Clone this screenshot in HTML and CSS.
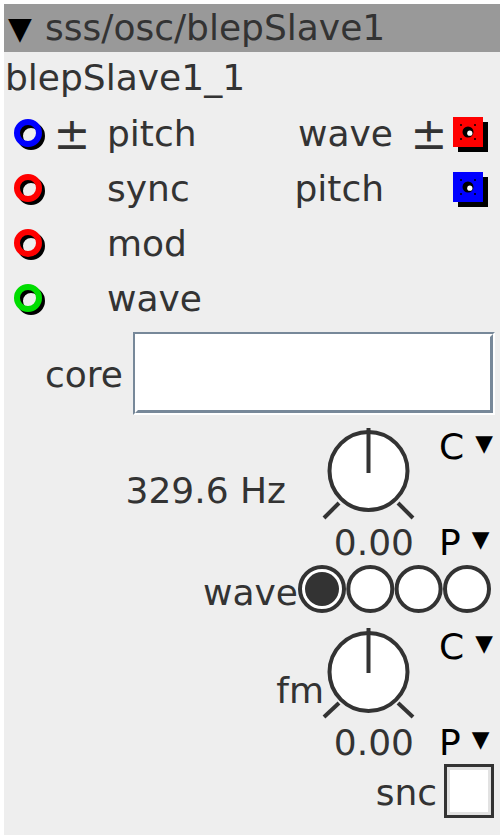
FILE: index.html
```
<!DOCTYPE html>
<html lang="en">
<head>
    <meta charset="UTF-8">
    <meta name="viewport" content="width=device-width, initial-scale=1.0">
    <title>blepSlave1</title>
    <link rel="stylesheet" href="styles.css">
</head>
<body>
    <div class="node">
        <div class="title"><span class="caret">▼</span><span class="path">sss/osc/blepSlave1</span></div>
        <div class="name">blepSlave1_1</div>

        <div class="ports">
            <div class="inlets">
                <div class="port">
                    <svg class="ring" width="40" height="40" viewBox="0 0 40 40">
                        <circle cx="21" cy="22" r="11" fill="none" stroke="#000" stroke-width="6"/>
                        <circle cx="18" cy="19" r="11" fill="none" stroke="#0000ff" stroke-width="6"/>
                    </svg>
                    <span class="pm">±</span>
                    <span class="plabel">pitch</span>
                </div>
                <div class="port">
                    <svg class="ring" width="40" height="40" viewBox="0 0 40 40">
                        <circle cx="21" cy="22" r="11" fill="none" stroke="#000" stroke-width="6"/>
                        <circle cx="18" cy="19" r="11" fill="none" stroke="#ff0000" stroke-width="6"/>
                    </svg>
                    <span class="pm"></span>
                    <span class="plabel">sync</span>
                </div>
                <div class="port">
                    <svg class="ring" width="40" height="40" viewBox="0 0 40 40">
                        <circle cx="21" cy="22" r="11" fill="none" stroke="#000" stroke-width="6"/>
                        <circle cx="18" cy="19" r="11" fill="none" stroke="#ff0000" stroke-width="6"/>
                    </svg>
                    <span class="pm"></span>
                    <span class="plabel">mod</span>
                </div>
                <div class="port">
                    <svg class="ring" width="40" height="40" viewBox="0 0 40 40">
                        <circle cx="21" cy="22" r="11" fill="none" stroke="#000" stroke-width="6"/>
                        <circle cx="18" cy="19" r="11" fill="none" stroke="#00dd00" stroke-width="6"/>
                    </svg>
                    <span class="pm"></span>
                    <span class="plabel">wave</span>
                </div>
            </div>

            <div class="outlets">
                <div class="port out">
                    <span class="plabel">wave</span>
                    <span class="pm">±</span>
                    <svg class="jack" width="40" height="40" viewBox="0 0 40 40">
                        <rect x="5" y="5" width="30" height="30" fill="#000"/>
                        <rect x="0" y="0" width="30" height="30" fill="#ff0000"/>
                        <circle cx="15" cy="15" r="5.5" fill="#000"/>
                        <circle cx="16.8" cy="16.2" r="2.6" fill="#fff"/>
                        <path d="M7 8h2M8 7v2M21 8h2M22 7v2M7 22h2M8 21v2M21 22h2M22 21v2" stroke="#000" stroke-width="1"/>
                    </svg>
                </div>
                <div class="port out">
                    <span class="plabel short">pitch</span>
                    <span class="pm"></span>
                    <svg class="jack" width="40" height="40" viewBox="0 0 40 40">
                        <rect x="5" y="5" width="30" height="30" fill="#000"/>
                        <rect x="0" y="0" width="30" height="30" fill="#0000ff"/>
                        <circle cx="15" cy="15" r="5.5" fill="#000"/>
                        <circle cx="16.8" cy="16.2" r="2.6" fill="#fff"/>
                        <path d="M7 8h2M8 7v2M21 8h2M22 7v2M7 22h2M8 21v2M21 22h2M22 21v2" stroke="#000" stroke-width="1"/>
                    </svg>
                </div>
            </div>
        </div>

        <div class="core-row">
            <span class="core-label">core</span>
            <div class="field"><div class="field-in"></div></div>
        </div>

        <div class="knob-block first">
            <span class="klabel hz">329.6 Hz</span>
            <svg class="knob" width="96" height="96" viewBox="0 0 96 96">
                <circle cx="46.5" cy="45" r="39" fill="#fff" stroke="#333" stroke-width="4"/>
                <line x1="46.5" y1="2" x2="46.5" y2="47" stroke="#333" stroke-width="4"/>
                <line x1="2" y1="92" x2="17" y2="77" stroke="#333" stroke-width="4"/>
                <line x1="76" y1="77" x2="91" y2="92" stroke="#333" stroke-width="4"/>
            </svg>
            <div class="menu top"><span>C</span><span class="tri">▼</span></div>
            <span class="value">0.00</span>
            <div class="menu"><span>P</span><span class="tri">▼</span></div>
        </div>

        <div class="radio-row">
            <span class="rlabel">wave</span>
            <svg class="radios" width="196" height="52" viewBox="0 0 196 52">
                <circle cx="24" cy="25" r="22" fill="#fff" stroke="#333" stroke-width="4"/>
                <circle cx="72.3" cy="25" r="22" fill="#fff" stroke="#333" stroke-width="4"/>
                <circle cx="120.6" cy="25" r="22" fill="#fff" stroke="#333" stroke-width="4"/>
                <circle cx="169" cy="25" r="22" fill="#fff" stroke="#333" stroke-width="4"/>
                <circle cx="24" cy="25" r="17" fill="#333"/>
            </svg>
        </div>

        <div class="knob-block second">
            <span class="klabel fm">fm</span>
            <svg class="knob" width="96" height="96" viewBox="0 0 96 96">
                <circle cx="46.5" cy="46" r="39" fill="#fff" stroke="#333" stroke-width="4"/>
                <line x1="46.5" y1="2" x2="46.5" y2="47" stroke="#333" stroke-width="4"/>
                <line x1="2" y1="91" x2="17" y2="77" stroke="#333" stroke-width="4"/>
                <line x1="76" y1="77" x2="91" y2="91" stroke="#333" stroke-width="4"/>
            </svg>
            <div class="menu top"><span>C</span><span class="tri">▼</span></div>
            <span class="value">0.00</span>
            <div class="menu"><span>P</span><span class="tri">▼</span></div>
        </div>

        <div class="check-row">
            <span class="clabel">snc</span>
            <div class="check"></div>
        </div>
    </div>
</body>
</html>
```

FILE: styles.css
```
html{
    background-color: white;
}
body{
    margin: 0;
    font-family: "DejaVu Sans", sans-serif;
    font-size: 36px;
    line-height: 42px;
    color: #333;
}
.node{
    margin: 4px 0 0 4px;
    width: 496px;
    height: 831px;
    background-color: #eee;
}
.title{
    height: 48px;
    line-height: 48px;
    background-color: #999;
    display: flex;
    align-items: center;
}
.caret{
    color: black;
    font-size: 31px;
    margin-left: 4px;
    width: 37px;
}
.name{
    height: 54px;
    line-height: 52px;
    padding-left: 1px;
}

/* ports */
.ports{
    display: flex;
    justify-content: space-between;
    height: 223px;
}
.port{
    display: flex;
    align-items: center;
    height: 55px;
}
.ring{
    margin-left: 6px;
    flex: none;
}
.pm{
    font-size: 44px;
    width: 56px;
    text-align: center;
    flex: none;
}
.inlets .pm{
    width: 44px;
}
.inlets .plabel{
    margin-left: 13px;
}
.outlets{
    padding-right: 7px;
}
.port.out{
    justify-content: flex-end;
}
.port.out .pm{
    width: 48px;
    padding-left: 12px;
}
.port.out .short{
    margin-right: 9px;
}
.jack{
    margin-top: 6px;
    flex: none;
}

/* core text field */
.core-row{
    display: flex;
    align-items: flex-start;
    height: 89px;
    padding-top: 3px;
}
.core-label{
    width: 119px;
    text-align: right;
    margin-right: 10px;
    margin-top: 22px;
}
.field{
    box-sizing: border-box;
    width: 362px;
    height: 83px;
    border: 2px solid;
    border-color: #778899 white white #778899;
}
.field-in{
    box-sizing: border-box;
    height: 100%;
    background-color: white;
    border: 3px solid;
    border-color: white #778899 #778899 white;
}

/* knobs */
.knob-block{
    display: grid;
    grid-template-columns: 1fr 96px 82px;
    grid-template-rows: 96px 42px;
}
.knob-block.first{
    margin-top: 5px;
}
.knob-block.second{
    margin-top: 10px;
}
.klabel{
    justify-self: end;
    align-self: end;
    margin-bottom: 10px;
}
.klabel.hz{
    margin-right: 36px;
}
.klabel.fm{
    margin-right: -2px;
}
.knob{
    display: block;
}
.value{
    grid-column: 2;
    justify-self: end;
    margin-right: 4px;
}
.menu{
    grid-column: 3;
    display: flex;
    align-items: flex-start;
    color: black;
    padding-left: 21px;
}
.menu.top{
    grid-row: 1;
}
.tri{
    font-size: 23px;
    line-height: 34px;
    margin-left: 11px;
}

/* radio group */
.radio-row{
    display: flex;
    justify-content: flex-end;
    align-items: flex-end;
    height: 52px;
    padding-right: 6px;
}
.rlabel{
    margin-bottom: 2px;
}
.radios{
    display: block;
}

/* checkbox */
.check-row{
    display: flex;
    justify-content: flex-end;
    align-items: flex-end;
    height: 54px;
    padding-right: 6px;
}
.clabel{
    margin-bottom: 4px;
    margin-right: 7px;
}
.check{
    box-sizing: border-box;
    width: 50px;
    height: 54px;
    border: 3px solid #333;
    background-color: white;
    box-shadow: inset 0 0 0 3px #e2e2e2;
}
```
